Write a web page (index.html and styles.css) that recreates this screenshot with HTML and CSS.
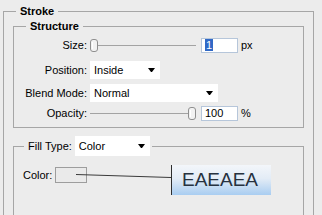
FILE: index.html
```html
<!doctype html>
<html>
<head>
    <meta charset="UTF-8">
    <link rel="stylesheet" href="styles.css">
</head>
<body>
<fieldset class="group group-stroke">
    <legend class="group-title">Stroke</legend>

    <fieldset class="group group-structure">
        <legend class="group-title">Structure</legend>

        <div class="row row-size">
            <div class="row-label">Size:</div>
            <div class="slider">
                <svg class="slider-thumb" width="8" height="13" viewBox="0 0 8 13">
                    <rect x="0.5" y="0.5" width="7" height="12" rx="2.5" fill="#f2f2f2" stroke="#8f8f8f"/>
                    <line x1="2.5" y1="3" x2="2.5" y2="10" stroke="#fff"/>
                </svg>
            </div>
            <div class="num-box"><span class="num-sel">1</span></div>
            <div class="unit">px</div>
        </div>

        <div class="row row-position">
            <div class="row-label">Position:</div>
            <div class="dropdown dropdown-position">
                <span>Inside</span>
                <span class="dropdown-arrow"></span>
            </div>
        </div>

        <div class="row row-blend">
            <div class="row-label">Blend Mode:</div>
            <div class="dropdown dropdown-blend">
                <span>Normal</span>
                <span class="dropdown-arrow"></span>
            </div>
        </div>

        <div class="row row-opacity">
            <div class="row-label">Opacity:</div>
            <div class="slider slider-max">
                <svg class="slider-thumb" width="8" height="13" viewBox="0 0 8 13">
                    <rect x="0.5" y="0.5" width="7" height="12" rx="2.5" fill="#f2f2f2" stroke="#8f8f8f"/>
                    <line x1="2.5" y1="3" x2="2.5" y2="10" stroke="#fff"/>
                </svg>
            </div>
            <div class="num-box">100</div>
            <div class="unit">%</div>
        </div>
    </fieldset>

    <fieldset class="group group-fill">
        <legend class="group-title fill-title">
            <span class="fill-head">
                <span>Fill Type:</span>
                <span class="dropdown dropdown-fill">
                    <span>Color</span>
                    <span class="dropdown-arrow"></span>
                </span>
            </span>
        </legend>

        <div class="color-row">
            <div>Color:</div>
            <div class="swatch"></div>
            <svg class="callout-line" width="160" height="16">
                <line x1="62" y1="7.5" x2="157" y2="10.5" stroke="#3a3a3a" stroke-width="1"/>
            </svg>
            <div class="callout">EAEAEA</div>
        </div>
    </fieldset>
</fieldset>
</body>
</html>
```

FILE: styles.css
```css
body {
    margin: 0;
    background-color: #ececec;
    font-family: "Liberation Sans", Arial, sans-serif;
    font-size: 11px;
    color: #000;
    overflow: hidden;
}

.group {
    box-sizing: border-box;
    min-width: 0;
    margin: 0;
    border: 1px solid #a6a6a6;
}

.group-title {
    padding: 0 4px;
    font-weight: bold;
    line-height: 13px;
}

/* the dialog is cropped: outer and fill groups run on past the bottom edge */
.group-stroke {
    width: 311px;
    height: 210px;
    margin: 5px 0 0 3px;
    padding: 2px 9px 0;
    border-bottom: 0;
}

.group-stroke > .group-title {
    margin-left: 3px;
}

.group-structure {
    padding: 4px 0 7px;
}

.group-structure > .group-title {
    margin-left: 12px;
}

.row {
    display: flex;
    align-items: center;
}

.row-size {
    height: 16px;
}

.row-position {
    height: 18px;
    margin-top: 8px;
}

.row-blend {
    height: 18px;
    margin-top: 5px;
}

.row-opacity {
    height: 14px;
    margin-top: 4px;
}

.row-label {
    width: 73px;
    margin-right: 3px;
    text-align: right;
}

.slider {
    display: flex;
    align-items: center;
    width: 106px;
    height: 13px;
    margin-right: 5px;
    background: linear-gradient(#a3a3a3, #a3a3a3) center / 100% 1px no-repeat;
}

.slider-max {
    justify-content: flex-end;
}

.slider-thumb {
    display: block;
}

.num-box {
    box-sizing: border-box;
    width: 37px;
    height: 15px;
    padding-left: 3px;
    border: 1px solid #b6c6da;
    background-color: #fff;
    line-height: 13px;
}

.num-sel {
    padding: 0 1px;
    background-color: #3169c6;
    color: #fff;
}

.unit {
    margin-left: 3px;
}

.dropdown {
    box-sizing: border-box;
    display: flex;
    align-items: center;
    justify-content: space-between;
    height: 18px;
    padding: 0 5px 0 4px;
    background-color: #fff;
}

.dropdown-position {
    width: 70px;
}

.dropdown-blend {
    width: 128px;
}

.dropdown-arrow {
    width: 1px;
    height: 0;
    border-top: 4px solid #000;
    border-left: 3px solid transparent;
    border-right: 3px solid transparent;
}

.group-fill {
    height: 79px;
    margin-top: 8px;
    padding: 11px 0 0;
    border-bottom: 0;
}

.fill-title {
    margin-left: 10px;
    padding: 0 2px 0 4px;
    font-weight: normal;
    line-height: 20px;
}

.fill-head {
    display: flex;
    align-items: center;
    height: 20px;
}

.dropdown-fill {
    width: 75px;
    height: 20px;
    margin-left: 3px;
}

.color-row {
    position: relative;
    display: flex;
    align-items: center;
    height: 16px;
    padding-left: 9px;
}

.swatch {
    box-sizing: border-box;
    width: 32px;
    height: 16px;
    margin-left: 3px;
    border: 1px solid #9d9d9d;
    background-color: #eaeaea;
}

.callout-line {
    position: absolute;
    left: 0;
    top: 0;
    overflow: visible;
}

.callout {
    position: absolute;
    left: 157px;
    top: -2px;
    box-sizing: border-box;
    width: 100px;
    height: 30px;
    padding-left: 10px;
    border-left: 1px solid #2e2e2e;
    background: linear-gradient(#f3f6fa, #e3ecf6 45%, #a9cdf1);
    color: #27323f;
    font-size: 19px;
    line-height: 30px;
}
```
